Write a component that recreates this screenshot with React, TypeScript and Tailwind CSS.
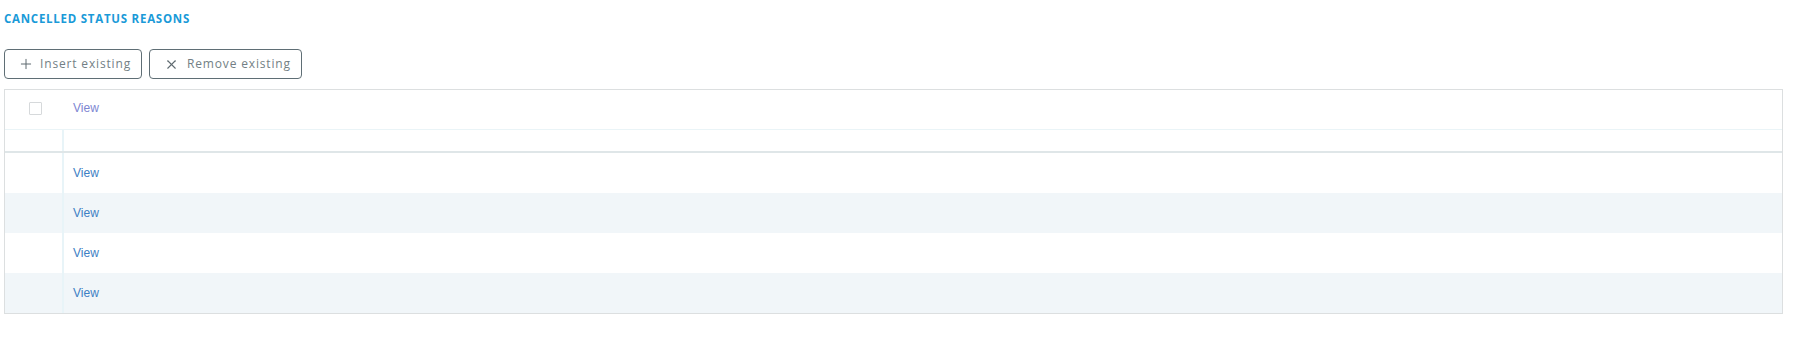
import { Plus, X } from "lucide-react";

const rows = [0, 1, 2, 3];

export default function App() {
    return (
        <div className="w-[1793px] h-[338px] bg-white pl-[4px] pt-[11px]">
            {/* title */}
            <div className="font-['Open_Sans',sans-serif] text-[11.5px] font-bold tracking-[0.065em] leading-[16px] text-[#1a9ad8]">
                CANCELLED STATUS REASONS
            </div>

            {/* actions */}
            <div className="mt-[22px] flex gap-[7px]">
                <button className="h-[30px] w-[138px] flex items-center gap-[6px] pl-[13px] rounded-[4px] border border-[#5f6e75] text-[#737f85] font-['Open_Sans',sans-serif] text-[12px] tracking-[0.07em]">
                    <Plus size={16} strokeWidth={1.5} className="text-[#5f6a70]" />
                    Insert existing
                </button>
                <button className="h-[30px] w-[153px] flex items-center gap-[8px] pl-[14px] rounded-[4px] border border-[#5f6e75] text-[#737f85] font-['Open_Sans',sans-serif] text-[12px] tracking-[0.07em]">
                    <X size={15} strokeWidth={1.7} className="text-[#5f6a70]" />
                    Remove existing
                </button>
            </div>

            {/* table */}
            <div className="mt-[10px] w-[1779px] border border-[#dcdfe0] font-['Liberation_Sans',Arial,sans-serif] text-[12px]">
                <div className="h-[39px] flex items-center pb-[3px]">
                    <div className="w-[59px] flex justify-center pl-[2px]">
                        <div className="w-[13px] h-[13px] border border-[#d6d9db] rounded-[1px] bg-white" />
                    </div>
                    <div className="pl-[9px] text-[#7d86d2]">View</div>
                </div>
                <div className="h-[24px] flex border-t border-[#eaf4f7] border-b-2 border-b-[#dfe6e8]">
                    <div className="w-[59px] border-r-2 border-[#e8f4f8]" />
                    <div className="flex-1" />
                </div>
                {rows.map((i) => (
                    <div
                        key={i}
                        className={
                            "h-[40px] flex " +
                            (i % 2 === 1 ? "bg-[#f1f6f9]" : "bg-white")
                        }
                    >
                        <div className="w-[59px] border-r-2 border-[#e8f4f8]" />
                        <div className="flex-1 flex items-center pl-[9px] text-[#3d80c4]">
                            View
                        </div>
                    </div>
                ))}
            </div>
        </div>
    );
}
